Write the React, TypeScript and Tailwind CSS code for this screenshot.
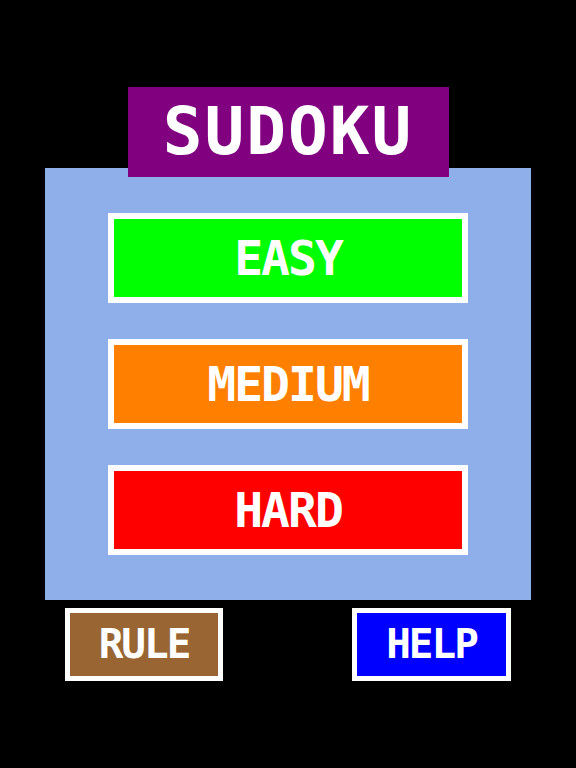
const font = { fontFamily: '"DejaVu Sans Mono", "Liberation Mono", monospace' }

function LevelButton({ label, color }: { label: string; color: string }) {
  return (
    <div className={`w-[360px] h-[90px] border-[6px] border-white ${color} flex items-center justify-center`}>
      <span className="text-white font-bold text-[48px] leading-none tracking-[-2px]" style={font}>
        {label}
      </span>
    </div>
  )
}

export default function App() {
  return (
    <div className="w-[576px] h-[768px] bg-black pt-[87px]">
      <div className="relative z-10 mx-auto w-[321px] h-[90px] bg-[#800080] flex items-center justify-center">
        <span className="text-white font-bold text-[66px] leading-none tracking-[2px]" style={font}>
          SUDOKU
        </span>
      </div>
      <div className="-mt-[9px] ml-[45px] w-[486px] h-[432px] bg-[#8eafe9] flex flex-col items-center pt-[45px] gap-[36px]">
        <LevelButton label="EASY" color="bg-[#00ff00]" />
        <LevelButton label="MEDIUM" color="bg-[#ff8000]" />
        <LevelButton label="HARD" color="bg-[#ff0000]" />
      </div>
      <div className="mt-[8px] flex">
        <div className="ml-[65px] w-[158px] h-[73px] border-[5px] border-white bg-[#996633] flex items-center justify-center">
          <span className="text-white font-bold text-[41px] leading-none tracking-[-2px]" style={font}>
            RULE
          </span>
        </div>
        <div className="ml-[129px] w-[159px] h-[73px] border-[5px] border-white bg-[#0000ff] flex items-center justify-center">
          <span className="text-white font-bold text-[41px] leading-none tracking-[-2px]" style={font}>
            HELP
          </span>
        </div>
      </div>
    </div>
  )
}
